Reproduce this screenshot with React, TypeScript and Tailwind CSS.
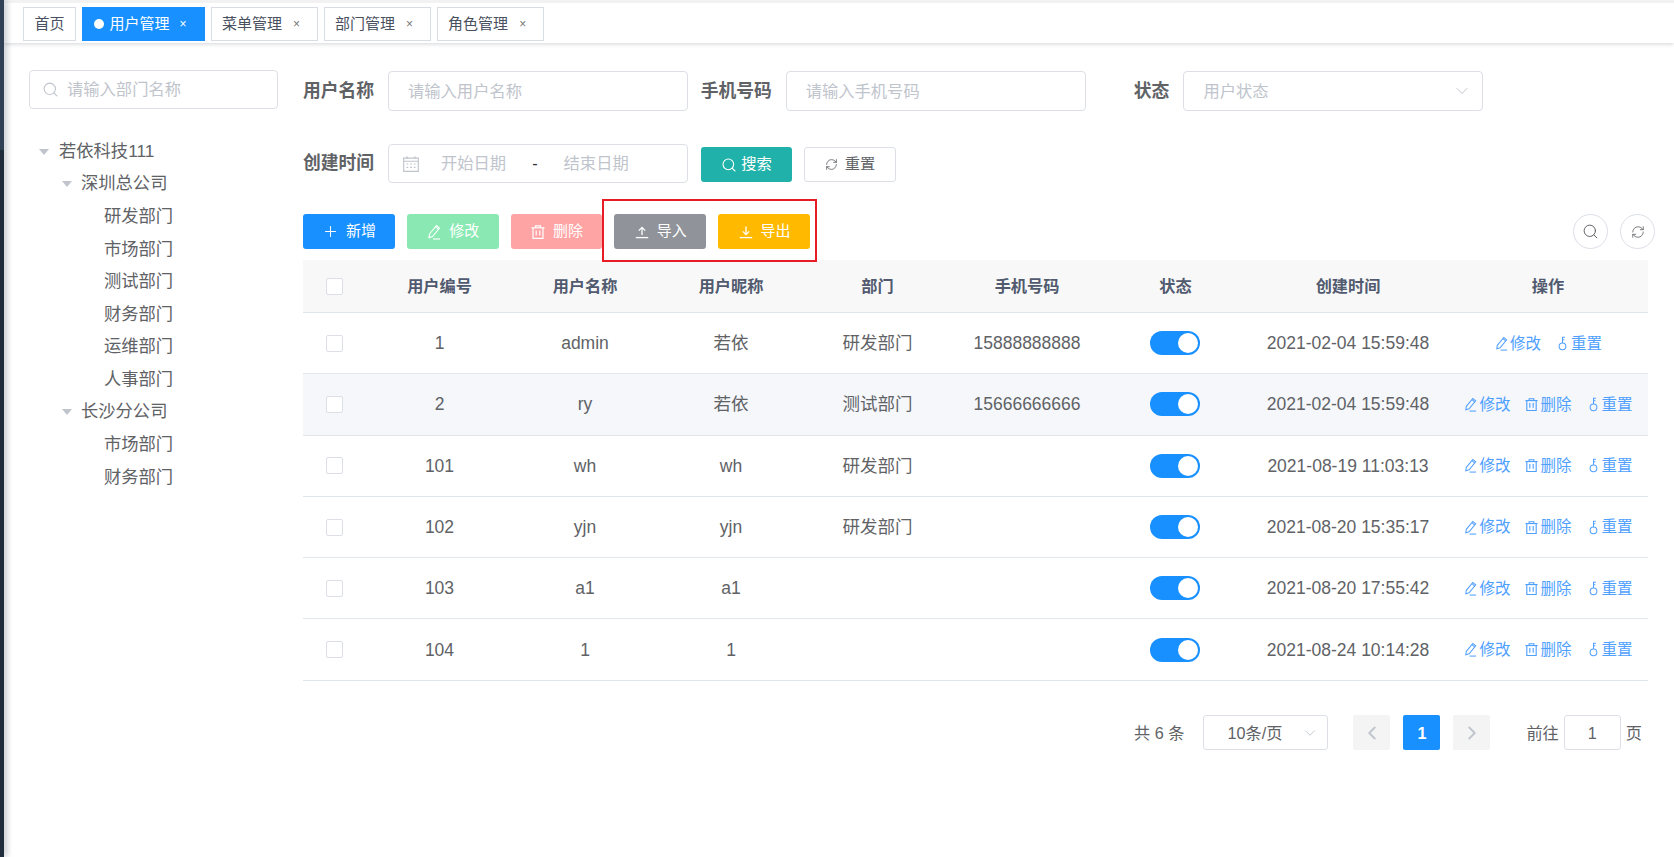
import { ChevronDown, ChevronLeft, ChevronRight, Plus, RefreshCw, Search } from "lucide-react";

const font = "font-['Liberation_Sans','Noto_Sans_CJK_SC',sans-serif]";

const tabs = ["菜单管理", "部门管理", "角色管理"];

const tree = [
  { label: "若依科技111", depth: 0, open: true },
  { label: "深圳总公司", depth: 1, open: true },
  { label: "研发部门", depth: 2 },
  { label: "市场部门", depth: 2 },
  { label: "测试部门", depth: 2 },
  { label: "财务部门", depth: 2 },
  { label: "运维部门", depth: 2 },
  { label: "人事部门", depth: 2 },
  { label: "长沙分公司", depth: 1, open: true },
  { label: "市场部门", depth: 2 },
  { label: "财务部门", depth: 2 },
];

const rows = [
  { id: "1", name: "admin", nick: "若依", dept: "研发部门", phone: "15888888888", time: "2021-02-04 15:59:48", canDelete: false },
  { id: "2", name: "ry", nick: "若依", dept: "测试部门", phone: "15666666666", time: "2021-02-04 15:59:48", canDelete: true },
  { id: "101", name: "wh", nick: "wh", dept: "研发部门", phone: "", time: "2021-08-19 11:03:13", canDelete: true },
  { id: "102", name: "yjn", nick: "yjn", dept: "研发部门", phone: "", time: "2021-08-20 15:35:17", canDelete: true },
  { id: "103", name: "a1", nick: "a1", dept: "", phone: "", time: "2021-08-20 17:55:42", canDelete: true },
  { id: "104", name: "1", nick: "1", dept: "", phone: "", time: "2021-08-24 10:14:28", canDelete: true },
];

const EditIcon = ({ className }: { className?: string }) => (
  <svg viewBox="0 0 16 16" fill="none" stroke="currentColor" strokeWidth="1.1" className={className}>
    <path d="M3.5 10 10.5 1.5 13.5 4 6.5 12.5 3 13.6Z" />
    <path d="M9.5 2.8 12.4 5.2" />
    <path d="M7 15H14" />
  </svg>
);

const TrashIcon = ({ className }: { className?: string }) => (
  <svg viewBox="0 0 16 16" fill="none" stroke="currentColor" strokeWidth="1.2" className={className}>
    <path d="M1.5 3.8H14.5" />
    <path d="M5.5 3.8V1.8H10.5V3.8" />
    <path d="M3 3.8V14.4H13V3.8" />
    <path d="M6.2 6.5V11.5M9.8 6.5V11.5" />
  </svg>
);

const KeyIcon = ({ className }: { className?: string }) => (
  <svg viewBox="0 0 16 16" fill="none" stroke="currentColor" strokeWidth="1.1" className={className}>
    <circle cx="8" cy="11" r="3.6" />
    <path d="M8 7.4V1.4H10.6M8 4H10" />
  </svg>
);

const UploadIcon = ({ className }: { className?: string }) => (
  <svg viewBox="0 0 16 16" fill="none" stroke="currentColor" strokeWidth="1.3" className={className}>
    <path d="M8 11V3.5M4.8 6.6 8 3.4 11.2 6.6" />
    <path d="M1.8 13.6H14.2" />
  </svg>
);

const DownloadIcon = ({ className }: { className?: string }) => (
  <svg viewBox="0 0 16 16" fill="none" stroke="currentColor" strokeWidth="1.3" className={className}>
    <path d="M8 2.5V10.5M4.8 7.4 8 10.6 11.2 7.4" />
    <path d="M1.8 13.6H14.2" />
  </svg>
);

const DateIcon = ({ className }: { className?: string }) => (
  <svg viewBox="0 0 16 16" fill="none" stroke="currentColor" strokeWidth="1" className={className}>
    <path d="M1.5 2.8H14.5V14.5H1.5Z" />
    <path d="M1.5 5.5H14.5M4.5 1V3.5M11.5 1V3.5" />
    <path d="M4 8H5.5M7.2 8H8.8M10.5 8H12M4 11H5.5M7.2 11H8.8M10.5 11H12" />
  </svg>
);

const TreeRow = ({ label, depth, open }: { label: string; depth: number; open?: boolean }) => (
  <div className={`flex h-[32.6px] items-center ${depth === 0 ? "pl-[10px]" : depth === 1 ? "pl-[33px]" : "pl-[75px]"}`}>
    {open && (
      <span className={`h-0 w-0 border-x-[5px] border-t-[6px] border-x-transparent border-t-[#c0c4cc] ${depth === 0 ? "mr-[10px]" : "mr-[9px]"}`} />
    )}
    <span className="text-[17.3px] text-[#606266]">{label}</span>
  </div>
);

const FormLabel = ({ children }: { children: string }) => (
  <label className="w-[85px] shrink-0 pr-[14px] text-right text-[17.8px] font-bold whitespace-nowrap text-[#606266]">
    {children}
  </label>
);

const TextInput = ({ placeholder }: { placeholder: string }) => (
  <div className="flex h-[40px] w-[300px] items-center rounded-[4px] border border-[#dcdfe6] pl-[19px] text-[16.3px] text-[#c0c4cc]">
    {placeholder}
  </div>
);

const ToolButton = ({ bg, icon, label }: { bg: string; icon: React.ReactNode; label: string }) => (
  <button className={`flex h-[35px] w-[91.8px] items-center justify-center gap-[7px] rounded-[3px] text-[15px] text-white ${bg}`}>
    {icon}
    {label}
  </button>
);

const Action = ({ icon, label }: { icon: React.ReactNode; label: string }) => (
  <span className="flex items-center gap-[1px] text-[15.5px] whitespace-nowrap text-[#4f9fff]">
    {icon}
    {label}
  </span>
);

const headers = ["用户编号", "用户名称", "用户昵称", "部门", "手机号码", "状态", "创建时间", "操作"];

export default function App() {
  return (
    <div className={`${font} flex h-[857px] w-[1674px] overflow-hidden bg-white`}>
      <div className="relative z-10 flex w-[4px] shrink-0 flex-col shadow-[2px_0_6px_rgba(0,21,41,0.35)]">
        <div className="h-[150px] bg-[#304156]" />
        <div className="flex-1 bg-[#1f2d3d]" />
      </div>

      <div className="min-w-0 flex-1">
        {/* tags */}
        <div className="flex h-[43px] items-start gap-[6px] border-t-[3px] border-[#f2f2f2] pt-[4px] pl-[19px] shadow-[0_1px_4px_rgba(0,21,41,0.18)]">
          <span className="flex h-[34px] items-center border border-[#d8dce5] px-[10.5px] text-[15px] text-[#495060]">首页</span>
          <span className="flex h-[34px] items-center border border-[#1890ff] bg-[#1890ff] pr-[17.5px] pl-[10.5px] text-[15px] text-white">
            <span className="mr-[6px] h-[10px] w-[10px] rounded-full bg-white" />
            用户管理
            <span className="ml-[10px] text-[12px]">×</span>
          </span>
          {tabs.map((t) => (
            <span key={t} className="flex h-[34px] items-center border border-[#d8dce5] pr-[17px] pl-[10px] text-[15px] text-[#495060]">
              {t}
              <span className="ml-[11px] text-[12px] text-[#777]">×</span>
            </span>
          ))}
        </div>

        <div className="flex">
          {/* dept tree */}
          <aside className="w-[299px] shrink-0 pt-[27px] pl-[25px]">
            <div className="flex h-[39px] w-[249px] items-center rounded-[4px] border border-[#dcdfe6] pl-[12px] text-[16.3px] text-[#c0c4cc]">
              <Search className="mr-[8px] h-[17px] w-[17px]" strokeWidth={1.5} />
              请输入部门名称
            </div>
            <div className="mt-[26.4px]">
              {tree.map((n, i) => (
                <TreeRow key={i} {...n} />
              ))}
            </div>
          </aside>

          <main className="w-[1345px] pt-[28px]">
            <div className="flex items-center gap-[12.7px]">
              <div className="flex items-center">
                <FormLabel>用户名称</FormLabel>
                <TextInput placeholder="请输入用户名称" />
              </div>
              <div className="flex items-center">
                <FormLabel>手机号码</FormLabel>
                <TextInput placeholder="请输入手机号码" />
              </div>
              <div className="flex items-center">
                <FormLabel>状态</FormLabel>
                <div className="flex h-[40px] w-[300px] items-center justify-between rounded-[4px] border border-[#dcdfe6] pr-[10px] pl-[19px] text-[16.3px] text-[#c0c4cc]">
                  用户状态
                  <ChevronDown className="h-[20px] w-[20px]" strokeWidth={1.2} />
                </div>
              </div>
            </div>

            <div className="mt-[33px] flex items-center">
              <FormLabel>创建时间</FormLabel>
              <div className="flex h-[39px] w-[300px] items-center rounded-[4px] border border-[#dcdfe6] pl-[13px] text-[16.3px] text-[#c0c4cc]">
                <DateIcon className="h-[18px] w-[18px]" />
                <span className="ml-[21px]">开始日期</span>
                <span className="ml-[26px] text-[#303133]">-</span>
                <span className="ml-[26px]">结束日期</span>
              </div>
              <button className="mt-[2px] ml-[13px] flex h-[35px] w-[91px] items-center justify-center gap-[4px] rounded-[3px] bg-[#20b2aa] text-[15.3px] text-white">
                <Search className="h-[16px] w-[16px]" strokeWidth={1.6} />
                搜索
              </button>
              <button className="mt-[2px] ml-[12px] flex h-[35px] w-[92px] items-center justify-center gap-[7px] rounded-[3px] border border-[#dcdfe6] text-[15.3px] text-[#606266]">
                <RefreshCw className="h-[13px] w-[13px]" strokeWidth={1.5} />
                重置
              </button>
            </div>

            {/* toolbar */}
            <div className="relative mt-[31px] flex items-center gap-[12px]">
              <ToolButton bg="bg-[#1890ff]" icon={<Plus className="h-[17px] w-[17px]" strokeWidth={1.5} />} label="新增" />
              <ToolButton bg="bg-[#8ae9b3]" icon={<EditIcon className="h-[16px] w-[16px]" />} label="修改" />
              <ToolButton bg="bg-[#ffa4a4]" icon={<TrashIcon className="h-[16px] w-[16px]" />} label="删除" />
              <ToolButton bg="bg-[#909399]" icon={<UploadIcon className="h-[16px] w-[16px]" />} label="导入" />
              <ToolButton bg="bg-[#ffba00]" icon={<DownloadIcon className="h-[16px] w-[16px]" />} label="导出" />
              <div className="absolute top-[-15px] left-[299px] h-[63px] w-[215px] border-2 border-[#e81c24]" />
              <div className="absolute top-0 right-[-7px] flex gap-[12px]">
                <span className="flex h-[35px] w-[35px] items-center justify-center rounded-full border border-[#dcdfe6] text-[#606266]">
                  <Search className="h-[17px] w-[17px]" strokeWidth={1.4} />
                </span>
                <span className="flex h-[35px] w-[35px] items-center justify-center rounded-full border border-[#dcdfe6] text-[#606266]">
                  <RefreshCw className="h-[14px] w-[14px]" strokeWidth={1.4} />
                </span>
              </div>
            </div>

            <table className="mt-[11px] w-[1345px] table-fixed border-collapse text-center">
              <colgroup>
                <col className="w-[64px]" />
                <col className="w-[145px]" />
                <col className="w-[146px]" />
                <col className="w-[146px]" />
                <col className="w-[147px]" />
                <col className="w-[152px]" />
                <col className="w-[145px]" />
                <col className="w-[200px]" />
                <col className="w-[200px]" />
              </colgroup>
              <thead>
                <tr className="h-[52.5px] border-b border-[#dfe6ec] bg-[#f8f8f9] text-[16.2px] font-bold text-[#515a6e]">
                  <th className="pr-[2px]">
                    <span className="mx-auto block h-[17px] w-[17px] rounded-[2px] border border-[#dcdfe6] bg-white" />
                  </th>
                  {headers.map((h) => (
                    <th key={h} className="font-bold">{h}</th>
                  ))}
                </tr>
              </thead>
              <tbody>
                {rows.map((r) => (
                  <tr key={r.id} className={`h-[61.3px] border-b border-[#dfe6ec] text-[17.5px] text-[#606266] ${r.id === "2" ? "bg-[#f5f7fa]" : ""}`}>
                    <td className="pr-[2px]">
                      <span className="mx-auto block h-[17px] w-[17px] rounded-[2px] border border-[#dcdfe6] bg-white" />
                    </td>
                    <td>{r.id}</td>
                    <td>{r.name}</td>
                    <td>{r.nick}</td>
                    <td>{r.dept}</td>
                    <td>{r.phone}</td>
                    <td className="pr-[1px]">
                      <span className="mx-auto flex h-[24px] w-[50px] items-center justify-end rounded-full bg-[#1890ff] pr-[2px]">
                        <span className="h-[20px] w-[20px] rounded-full bg-white" />
                      </span>
                    </td>
                    <td>{r.time}</td>
                    <td>
                      <div className="flex items-center justify-center gap-[14px]">
                        <Action icon={<EditIcon className="h-[15px] w-[15px]" />} label="修改" />
                        {r.canDelete && <Action icon={<TrashIcon className="h-[15px] w-[15px]" />} label="删除" />}
                        <Action icon={<KeyIcon className="h-[15px] w-[15px]" />} label="重置" />
                      </div>
                    </td>
                  </tr>
                ))}
              </tbody>
            </table>

            {/* pagination */}
            <div className="mt-[34.5px] flex h-[35px] items-center justify-end pr-[6px] text-[16.2px] text-[#606266]">
              <span>共 6 条</span>
              <div className="ml-[19px] flex h-[35px] w-[125px] items-center justify-between rounded-[3px] border border-[#dcdfe6] pr-[8px] pl-[23px]">
                10条/页
                <ChevronDown className="h-[18px] w-[18px] text-[#c0c4cc]" strokeWidth={1.2} />
              </div>
              <span className="ml-[25px] flex h-[35px] w-[37px] items-center justify-center rounded-[2px] bg-[#f4f4f5] text-[#c0c4cc]">
                <ChevronLeft className="h-[22px] w-[22px]" strokeWidth={2} />
              </span>
              <span className="ml-[13px] flex h-[35px] w-[37px] items-center justify-center rounded-[2px] bg-[#1890ff] font-bold text-white">1</span>
              <span className="ml-[13px] flex h-[35px] w-[37px] items-center justify-center rounded-[2px] bg-[#f4f4f5] text-[#c0c4cc]">
                <ChevronRight className="h-[22px] w-[22px]" strokeWidth={2} />
              </span>
              <span className="ml-[36px]">前往</span>
              <span className="ml-[5px] flex h-[35px] w-[57px] items-center justify-center rounded-[3px] border border-[#dcdfe6]">1</span>
              <span className="ml-[5px]">页</span>
            </div>
          </main>
        </div>
      </div>
    </div>
  );
}
